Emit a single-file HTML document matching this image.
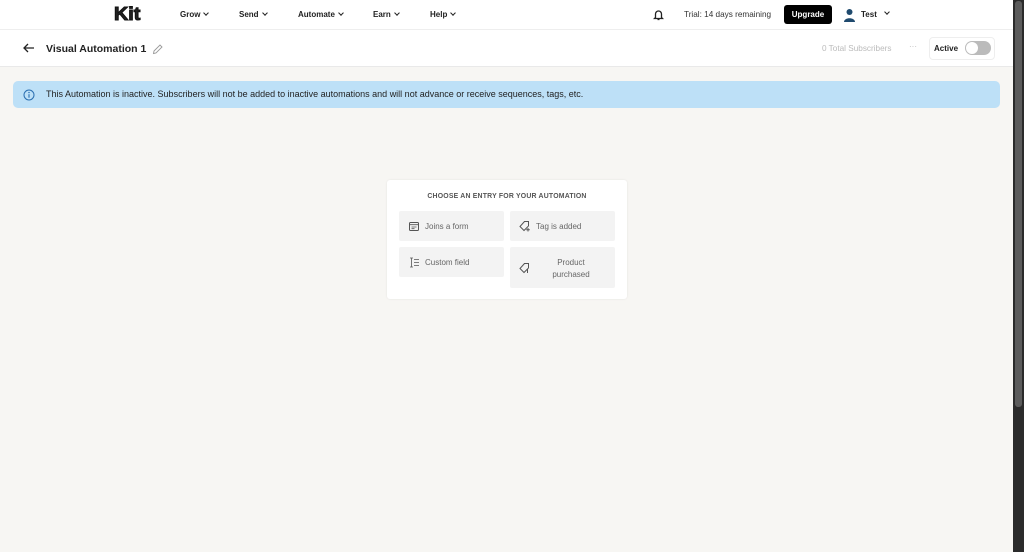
<!DOCTYPE html>
<html><head><style>
*{box-sizing:border-box;margin:0;padding:0}
body{width:1024px;height:552px;overflow:hidden;background:#f7f6f3;font-family:"Liberation Sans",sans-serif;color:#222;position:relative}
.top{position:absolute;left:0;top:0;width:1013px;height:30px;background:#fff;border-bottom:1px solid #eee}
.sub{position:absolute;left:0;top:30px;width:1013px;height:37px;background:#fff;border-bottom:1px solid #e9e9e9}
.t{position:absolute;white-space:nowrap}
.nav{font-size:8px;font-weight:bold;top:10px}
.chev{display:inline-block;width:4px;height:4px;border-right:1.3px solid #222;border-bottom:1.3px solid #222;transform:rotate(45deg);margin-left:4px;position:relative;top:-2px}
.sb{position:absolute;left:1013px;top:0;width:11px;height:552px;background:#2b2b2b}
.thumb{position:absolute;left:2px;top:1px;width:7px;height:406px;background:#5c5c5c;border-radius:3px}
.banner{position:absolute;left:13px;top:81px;width:987px;height:27px;background:#bde0f7;border-radius:5px}
.card{position:absolute;left:387px;top:180px;width:240px;height:119px;background:#fff;border-radius:3px;box-shadow:0 0 2px rgba(0,0,0,.08)}
.opt{position:absolute;background:#f3f3f3;border-radius:2px;font-size:8px;color:#666}
</style></head><body>
<div class="top">
<div class="t" style="left:114px;top:4px;font-size:18px;font-weight:900;letter-spacing:0px;-webkit-text-stroke:1px #111;transform:scaleX(1.1);transform-origin:left">Kit</div>
<div class="t nav" style="left:180px">Grow<span class="chev"></span></div>
<div class="t nav" style="left:239px">Send<span class="chev"></span></div>
<div class="t nav" style="left:298px">Automate<span class="chev"></span></div>
<div class="t nav" style="left:373px">Earn<span class="chev"></span></div>
<div class="t nav" style="left:430px">Help<span class="chev"></span></div>
<svg class="t" style="left:653px;top:9px" width="11" height="12" viewBox="0 0 11 12"><path d="M2.5 8.5V5a3 3 0 016 0v3.5l1 1H1.5z M4.5 10.5h2" fill="none" stroke="#222" stroke-width="1.3"/></svg>
<div class="t" style="left:684px;top:10px;font-size:8.2px;color:#333">Trial: 14 days remaining</div>
<div class="t" style="left:784px;top:5px;width:48px;height:19px;background:#000;border-radius:3px;color:#fff;font-size:8px;font-weight:bold;text-align:center;line-height:19px">Upgrade</div>
<svg class="t" style="left:843px;top:8px" width="13" height="14" viewBox="0 0 13 14"><circle cx="6.5" cy="4" r="3" fill="#1f4a6e"/><path d="M1 14c0-5 11-5 11 0z" fill="#1f4a6e"/></svg>
<div class="t nav" style="left:861px">Test</div>
<div style="position:absolute;left:885px;top:10px;width:4px;height:4px;border-right:1.3px solid #222;border-bottom:1.3px solid #222;transform:rotate(45deg)"></div>
</div>
<div class="sub">
<svg class="t" style="left:23px;top:13px" width="12" height="10" viewBox="0 0 12 10"><path d="M11 5H1.5M5 1L1 5l4 4" fill="none" stroke="#222" stroke-width="1.3"/></svg>
<div class="t" style="left:46px;top:13px;font-size:10.5px;font-weight:bold">Visual Automation 1</div>
<svg class="t" style="left:152px;top:14px" width="11" height="11" viewBox="0 0 11 11"><path d="M1.5 9.5l.5-2.5 6-6 2 2-6 6z" fill="none" stroke="#999" stroke-width="0.9"/></svg>
<div class="t" style="left:822px;top:14px;font-size:8.2px;color:#bbb">0 Total Subscribers</div>
<div class="t" style="left:909px;top:12px;font-size:8px;color:#bbb">···</div>
<div class="t" style="left:929px;top:7px;width:66px;height:23px;border:1px solid #eee;border-radius:4px"></div>
<div class="t" style="left:934px;top:14px;font-size:8px;font-weight:bold">Active</div>
<div class="t" style="left:965px;top:11px;width:26px;height:14px;border-radius:7px;background:#bbb"><div style="position:absolute;left:1px;top:1px;width:12px;height:12px;border-radius:6px;background:#fff"></div></div>
</div>
<div class="banner">
<svg class="t" style="left:10px;top:8px" width="12" height="12" viewBox="0 0 12 12"><circle cx="6" cy="6" r="5" fill="none" stroke="#2a6eb0" stroke-width="1"/><path d="M6 5.2v3.5" stroke="#2a6eb0" stroke-width="1.1"/><circle cx="6" cy="3.6" r=".7" fill="#2a6eb0"/></svg>
<div class="t" style="left:33px;top:8px;font-size:9px;color:#222">This Automation is inactive. Subscribers will not be added to inactive automations and will not advance or receive sequences, tags, etc.</div>
</div>
<div class="card">
<div class="t" style="left:0;width:240px;text-align:center;top:13px;font-size:6.9px;font-weight:bold;color:#555;letter-spacing:.2px">CHOOSE AN ENTRY FOR YOUR AUTOMATION</div>
<div class="opt" style="left:12px;top:31px;width:105px;height:30px"><svg class="t" style="left:10px;top:11px" width="10" height="9" viewBox="0 0 10 9"><rect x=".5" y=".5" width="9" height="8" rx="1" fill="none" stroke="#555"/><path d="M.5 2.7h9M2.5 5h5M2.5 6.7h3" stroke="#555" stroke-width=".8"/></svg><span class="t" style="left:26px;top:11px">Joins a form</span></div>
<div class="opt" style="left:123px;top:31px;width:105px;height:30px"><svg class="t" style="left:9px;top:9px" width="12" height="12" viewBox="0 0 12 12"><path d="M5 1.5H9.5v4.5M9.5 6L5 10.5 1 6.5 5.5 1.5" fill="none" stroke="#555"/><path d="M9 8v3.5M7.2 9.7h3.6" stroke="#555"/></svg><span class="t" style="left:26px;top:11px">Tag is added</span></div>
<div class="opt" style="left:12px;top:67px;width:105px;height:30px"><svg class="t" style="left:10px;top:10px" width="11" height="11" viewBox="0 0 11 11"><path d="M1 1h3M1 10h3M2.5 1v9M5 2.5h5M5 5.5h5M5 8.5h5" fill="none" stroke="#555" stroke-width=".8"/></svg><span class="t" style="left:26px;top:11px">Custom field</span></div>
<div class="opt" style="left:123px;top:67px;width:105px;height:41px"><svg class="t" style="left:9px;top:15px" width="12" height="12" viewBox="0 0 12 12"><path d="M5 1.5H9.5v4.5M9.5 6L5 10.5 1 6.5 5.5 1.5" fill="none" stroke="#555"/><path d="M8.5 7v4" stroke="#555"/></svg><span class="t" style="left:38px;top:10px;width:46px;text-align:center;line-height:12px;white-space:normal">Product purchased</span></div>
</div>
<div class="sb"><div class="thumb"></div></div>
</body></html>
